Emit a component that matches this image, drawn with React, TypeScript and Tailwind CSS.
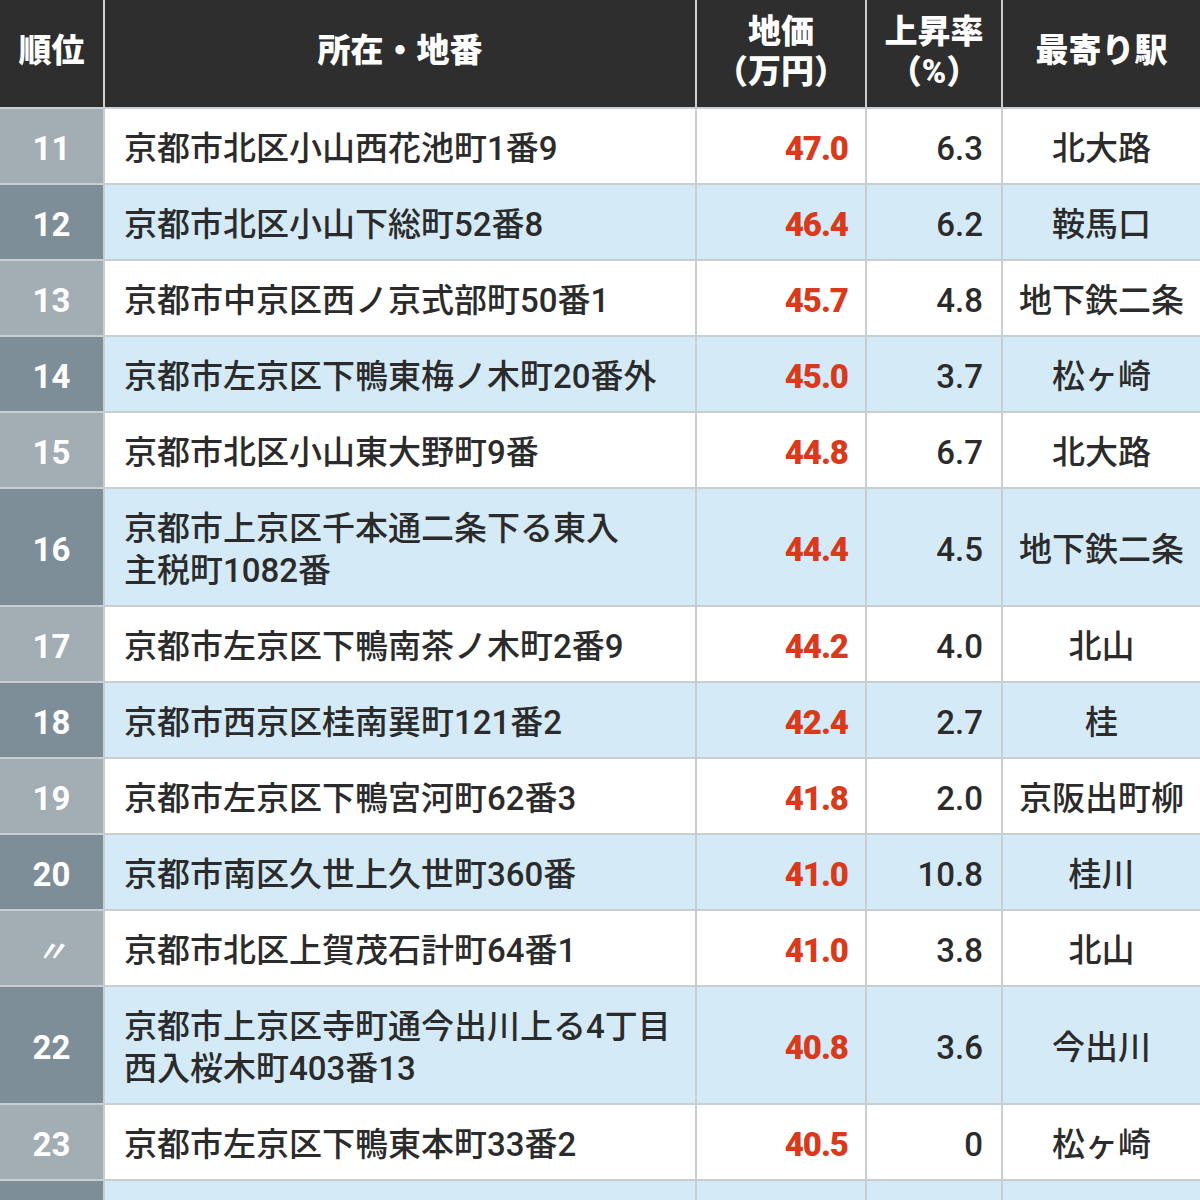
const rows = [
  { rank: "11", addr: ["京都市北区小山西花池町1番9"], price: "47.0", rate: "6.3", station: "北大路" },
  { rank: "12", addr: ["京都市北区小山下総町52番8"], price: "46.4", rate: "6.2", station: "鞍馬口" },
  { rank: "13", addr: ["京都市中京区西ノ京式部町50番1"], price: "45.7", rate: "4.8", station: "地下鉄二条" },
  { rank: "14", addr: ["京都市左京区下鴨東梅ノ木町20番外"], price: "45.0", rate: "3.7", station: "松ヶ崎" },
  { rank: "15", addr: ["京都市北区小山東大野町9番"], price: "44.8", rate: "6.7", station: "北大路" },
  { rank: "16", addr: ["京都市上京区千本通二条下る東入", "主税町1082番"], price: "44.4", rate: "4.5", station: "地下鉄二条" },
  { rank: "17", addr: ["京都市左京区下鴨南茶ノ木町2番9"], price: "44.2", rate: "4.0", station: "北山" },
  { rank: "18", addr: ["京都市西京区桂南巽町121番2"], price: "42.4", rate: "2.7", station: "桂" },
  { rank: "19", addr: ["京都市左京区下鴨宮河町62番3"], price: "41.8", rate: "2.0", station: "京阪出町柳" },
  { rank: "20", addr: ["京都市南区久世上久世町360番"], price: "41.0", rate: "10.8", station: "桂川" },
  { rank: "〃", addr: ["京都市北区上賀茂石計町64番1"], price: "41.0", rate: "3.8", station: "北山" },
  { rank: "22", addr: ["京都市上京区寺町通今出川上る4丁目", "西入桜木町403番13"], price: "40.8", rate: "3.6", station: "今出川" },
  { rank: "23", addr: ["京都市左京区下鴨東本町33番2"], price: "40.5", rate: "0", station: "松ヶ崎" },
  { rank: "", addr: [""], price: "", rate: "", station: "" },
];

export default function App() {
  return (
    <div className="w-[1200px] h-[1200px] overflow-hidden bg-white font-[Roboto,'Noto_Sans_CJK_JP',sans-serif] text-[#2b2b2b]">
      <div className="grid grid-cols-[103px_590px_168px_134px_197px] gap-[2px] bg-[#c9ced2]">
        {/* ヘッダー */}
        <div className="h-[107px] bg-[#2e2e2e] text-white font-black text-[33px] flex items-center justify-center pb-[6px]">順位</div>
        <div className="bg-[#2e2e2e] text-white font-black text-[33px] flex items-center justify-center pb-[6px]">所在・地番</div>
        <div className="bg-[#2e2e2e] text-white font-black text-[33px] leading-[40px] flex flex-col items-center justify-center pb-[4px]">
          <span>地価</span>
          <span>（万円）</span>
        </div>
        <div className="bg-[#2e2e2e] text-white font-black text-[33px] leading-[40px] flex flex-col items-center justify-center pb-[4px]">
          <span>上昇率</span>
          <span>（%）</span>
        </div>
        <div className="bg-[#2e2e2e] text-white font-black text-[33px] flex items-center justify-center pb-[6px]">最寄り駅</div>

        {rows.map((r, i) => {
          const odd = i % 2 === 1;
          const rowBg = odd ? "bg-[#d5eaf7]" : "bg-white";
          const h = r.addr.length > 1 ? "h-[116px]" : "h-[74px]";
          return (
            <div key={i} className="contents">
              <div
                className={`${odd ? "bg-[#7e8e98]" : "bg-[#a2adb4]"} ${h} pt-[6px] text-white font-bold text-[33px] flex items-center justify-center`}
              >
                {r.rank === "〃" ? <span className="italic text-[30px]">〃</span> : r.rank}
              </div>
              <div className={`${rowBg} pt-[6px] pl-[19px] text-[33px] font-medium leading-[42px] flex flex-col justify-center`}>
                {r.addr.map((line, j) => (
                  <span key={j} className="whitespace-nowrap min-h-[42px]">{line}</span>
                ))}
              </div>
              <div className={`${rowBg} pt-[6px] pr-[17px] text-[33px] font-black tracking-[-1px] text-[#d93a1c] flex items-center justify-end`}>
                {r.price}
              </div>
              <div className={`${rowBg} pt-[6px] pr-[18px] text-[33px] font-medium flex items-center justify-end`}>{r.rate}</div>
              <div className={`${rowBg} pt-[6px] text-[33px] font-medium flex items-center justify-center`}>{r.station}</div>
            </div>
          );
        })}
      </div>
    </div>
  );
}
